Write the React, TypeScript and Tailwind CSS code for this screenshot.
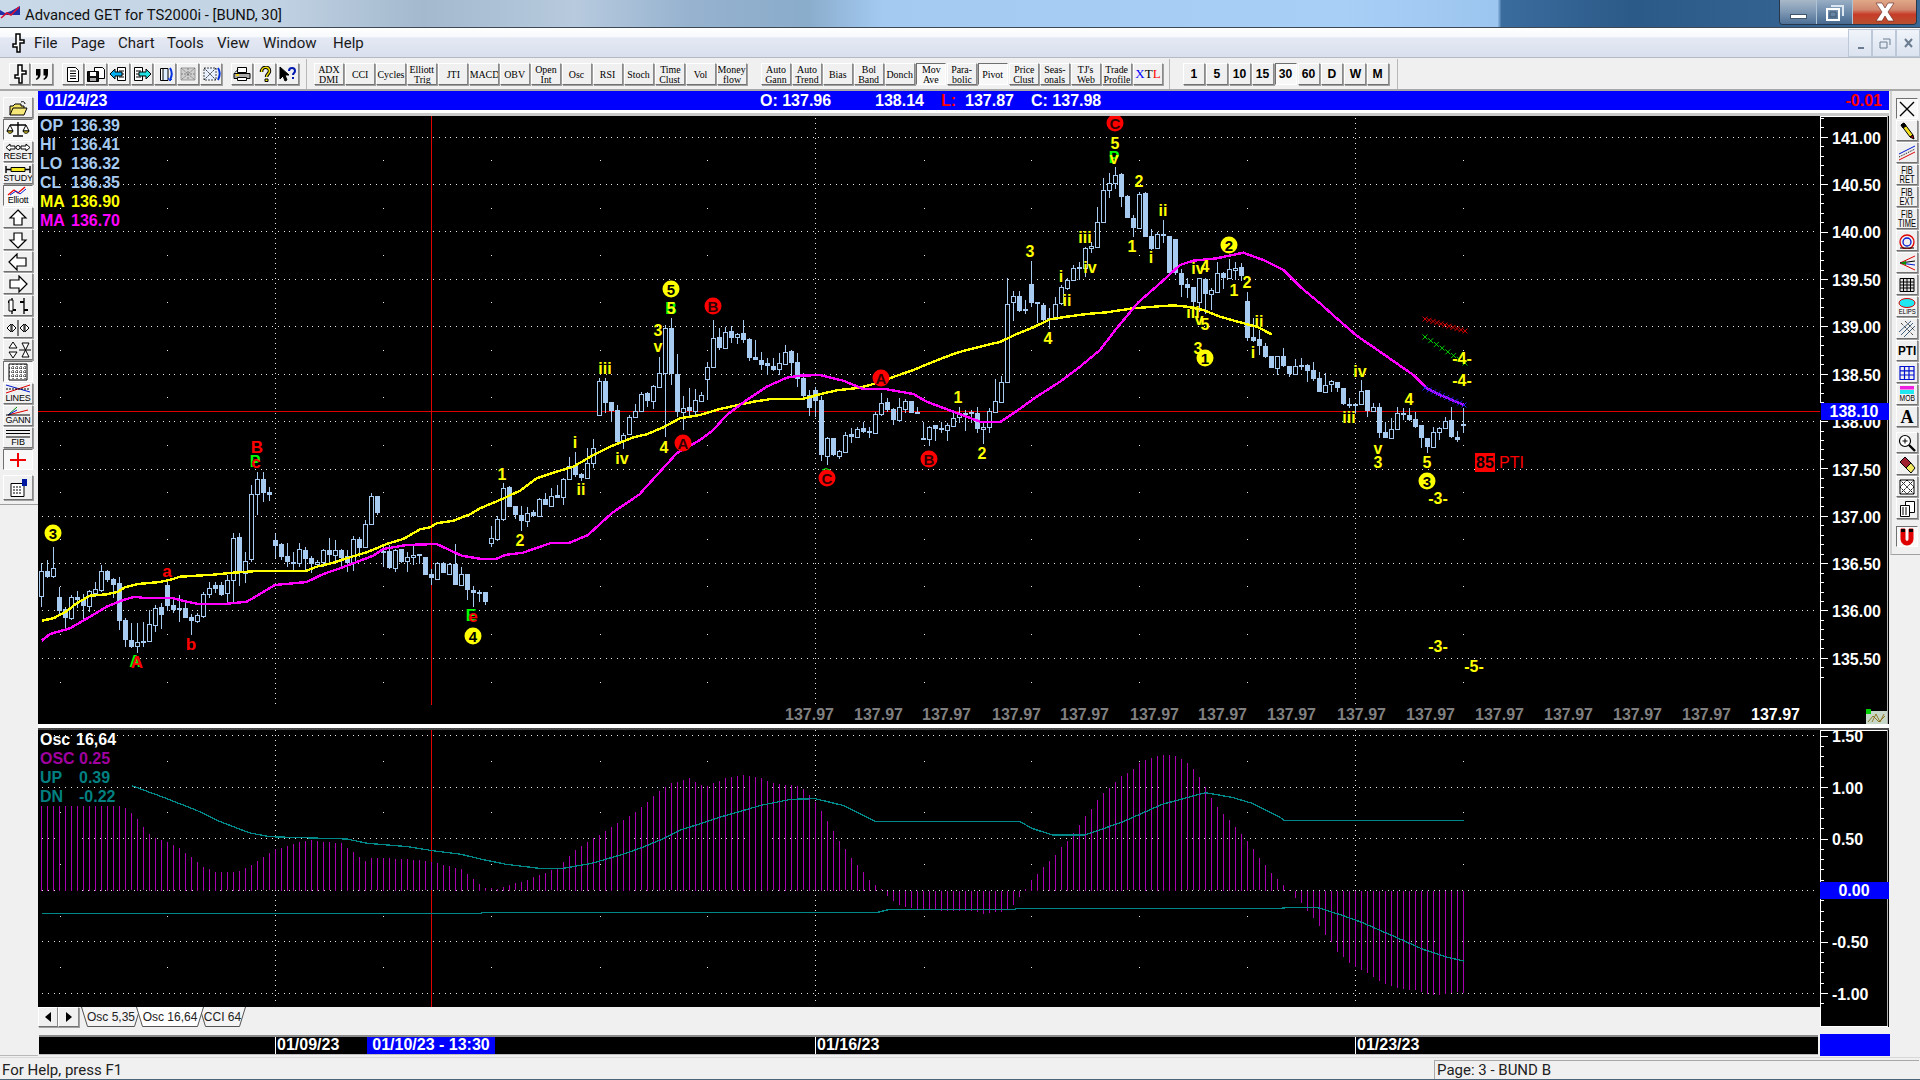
import type { ReactNode } from 'react';

type Row = number[];

// body and wick values are read off the chart: [x, high, bodyTop, bodyBottom, low, filled]
const toBars = (ox: number, oy: number, fx: number, rows: Row[]) =>
  rows.map(([x, hi, top, bot, lo, fill]) => ({
    x: Math.floor(ox + x / fx),
    hi: Math.round(oy + hi / 3),
    top: Math.round(oy + top / 3),
    bot: Math.round(oy + bot / 3),
    lo: Math.round(oy + lo / 3),
    fill,
  }));

const rowsA: Row[] = [
  [5,340,362,437,472,0],[23,330,363,380,385,1],[41,292,355,377,385,0],[59,412,442,483,497,1],[77,470,478,503,533,1],
  [95,435,442,503,510,0],[113,422,442,450,475,1],[131,432,448,468,508,1],[149,420,424,467,485,0],[167,395,418,428,440,0],
  [185,345,364,419,425,0],[203,360,363,389,395,1],[221,385,388,404,443,1],[239,380,400,512,540,1],[257,505,511,570,590,1],
  [275,518,570,590,595,1],[293,518,577,587,608,0],[311,516,574,578,590,1],[329,480,523,572,572,0],[347,465,473,525,545,0],
  [365,460,471,495,538,1],[383,392,405,467,483,1],[401,450,465,480,490,1],[419,435,475,479,515,1],[437,450,474,503,505,1],
  [455,493,502,512,555,1],[473,490,496,512,520,0],[491,425,433,497,503,0],[509,395,415,433,445,0],[527,395,406,416,430,1],
  [545,395,405,435,437,1],[563,375,391,430,455,0],[581,250,263,391,463,0],[599,250,262,370,408,1],[617,305,332,369,398,0],
  [635,105,133,328,335,0],[653,65,88,133,195,0],[671,67,88,128,155,1],[689,112,126,134,152,1],[707,252,271,288,325,1],
  [725,280,283,320,330,1],[743,280,319,335,350,1],[761,306,335,341,360,1],[779,278,298,340,352,0],[797,290,301,326,360,1],
  [815,318,325,342,368,1],[833,330,335,342,355,0],[851,298,301,336,350,0],[869,265,300,315,345,1],[887,270,299,315,335,0],
  [905,298,301,323,350,1],[923,300,318,339,365,1],[941,258,268,338,362,0],[959,262,268,294,320,1],[977,210,223,292,295,0],
  [995,128,137,223,225,0],[1013,139,139,188,195,1],[1031,290,302,307,352,1],[1049,285,304,354,356,1],[1067,298,300,353,365,0],
  [1085,298,298,336,340,1],[1103,305,320,334,365,0],[1121,288,314,319,345,0],[1139,313,313,319,342,1],[1157,320,322,374,376,1],
  [1175,358,372,384,405,1],[1193,335,340,386,390,0],[1211,335,340,369,370,1],[1229,340,343,372,375,0],[1247,282,343,404,404,1],
  [1265,352,373,404,405,0],[1283,373,373,420,450,1],[1301,408,421,428,470,1],[1319,420,427,429,455,1],[1337,427,427,456,465,1],
  [1355,228,265,278,290,0],[1373,198,208,267,272,0],[1391,100,115,208,212,0],[1409,108,112,170,172,1],[1427,168,169,195,208,1],
];

const rowsB: Row[] = [
  [1278,797,825,843,872,1],[1292,800,818,842,860,0],[1307,810,817,828,830,1],[1322,775,778,827,830,0],[1337,760,777,795,795,1],
  [1351,743,767,797,800,0],[1366,735,765,775,775,1],[1381,715,718,772,795,0],[1395,650,678,718,720,0],[1410,635,678,705,710,1],
  [1425,700,703,713,722,1],[1440,625,670,713,715,0],[1454,598,625,670,685,0],
];

const rowsC: Row[] = [
  [239,205,214,316,318,0],[257,205,213,278,310,1],[275,277,277,302,335,1],[293,285,300,396,400,1],[311,370,374,394,418,0],
  [329,316,320,372,375,0],[347,282,302,320,325,0],[365,245,253,303,305,0],[383,245,250,273,290,1],[401,225,229,272,297,0],
  [419,140,190,230,232,0],[437,45,53,188,380,0],[455,25,55,192,225,1],[473,132,193,305,322,1],[491,258,293,307,360,0],
  [509,235,292,303,325,1],[527,238,271,303,320,0],[545,245,256,272,273,0],[563,155,172,208,270,0],[581,30,83,172,175,0],
  [599,55,82,113,120,1],[617,50,65,113,115,0],[635,48,64,84,100,1],[653,70,73,82,102,0],[671,30,70,90,100,1],
  [689,85,88,143,152,1],[707,90,141,149,150,1],[725,125,149,165,180,1],[743,145,160,167,195,1],[761,145,168,179,182,1],
  [779,130,160,178,195,0],[797,105,127,161,162,0],[815,120,124,158,200,1],[833,130,156,206,230,1],[851,190,205,258,262,1],
  [869,240,255,293,318,1],[887,232,241,272,320,1],[905,258,271,435,452,1],[923,380,385,437,465,0],[941,385,385,435,437,1],
  [959,420,424,437,448,0],[977,365,374,426,428,0],[995,355,373,380,400,1],[1013,350,356,381,385,0],[1031,335,355,365,368,1],
  [1049,350,364,368,385,1],[1067,307,311,368,372,0],[1085,248,278,312,318,0],[1103,265,276,300,305,1],[1121,295,297,330,345,1],
  [1139,265,292,330,335,0],[1157,268,274,297,310,0],[1175,272,274,308,310,1],[1193,290,307,309,310,1],[1211,335,383,386,388,1],
  [1229,348,350,386,408,0],[1247,345,346,356,392,1],[1265,335,355,358,368,1],[1283,340,344,361,392,0],[1301,310,325,347,350,0],
  [1319,290,311,322,338,0],[1337,300,308,312,362,1],[1355,300,305,311,340,1],[1373,290,310,358,368,1],[1391,335,352,358,402,0],
  [1409,295,304,350,370,0],[1427,208,272,305,308,0],
];

const rowsD: Row[] = [
  [5,632,650,710,712,0],[23,340,416,650,652,0],[41,378,394,412,468,0],[59,378,394,437,440,1],[77,405,433,437,447,1],
  [95,288,358,414,425,1],[113,411,411,418,475,1],[131,415,420,466,475,1],[149,430,460,466,492,1],[167,395,416,461,463,0],
  [185,360,367,414,420,0],[203,340,346,368,375,0],[221,300,310,344,345,0],[239,290,306,311,345,1],[257,245,250,310,335,0],
  [275,230,244,250,265,0],[293,125,172,245,247,0],[311,38,76,170,172,0],[329,25,55,76,100,0],[347,5,30,55,72,0],
  [365,25,27,97,125,1],[383,90,92,158,160,1],[401,150,160,190,215,1],[419,82,88,188,190,0],[437,82,84,215,217,1],
  [455,192,213,252,255,1],[473,200,208,248,250,0],[491,165,208,214,235,1],[509,212,214,325,325,1],[527,222,222,325,330,1],
  [545,312,325,359,395,1],[563,340,358,368,400,1],[581,365,367,410,435,1],[599,338,340,410,440,0],[617,338,342,388,448,1],
  [635,368,374,386,435,0],[653,290,325,380,382,0],[671,320,325,340,372,1],[689,282,313,340,342,0],[707,290,308,316,345,0],
  [725,295,306,333,347,1],[743,380,408,518,528,1],[761,460,517,527,532,1],[779,496,522,542,570,1],[797,535,543,577,578,1],
  [815,573,573,608,610,1],[833,572,574,608,630,0],[851,550,574,604,605,1],[869,602,604,627,635,1],[887,582,602,628,630,0],
  [905,580,599,602,615,1],[923,598,600,618,650,1],[941,590,616,642,648,1],[959,620,640,680,682,1],[977,625,660,680,682,0],
  [995,645,649,658,682,0],[1013,650,652,668,680,1],[1031,668,670,716,720,1],[1049,700,717,724,728,1],[1067,716,718,720,745,1],
  [1085,645,677,718,720,0],[1103,676,676,738,755,1],[1121,715,727,737,742,0],[1139,715,727,803,818,1],[1157,770,802,818,820,1],
  [1175,760,793,818,820,0],[1193,725,745,792,795,0],[1211,728,743,747,765,1],[1229,730,750,765,768,1],[1247,740,763,785,790,1],
  [1265,780,781,820,848,1],[1283,820,820,845,865,1],[1301,785,800,845,847,0],[1319,785,788,801,825,0],[1337,755,767,788,790,0],
  [1355,725,766,817,820,1],[1373,798,815,825,830,1],[1391,730,777,780,805,1],
];

const bars = [
  ...toBars(40, 450, 3, rowsA),
  ...toBars(0, 240, 2.45, rowsB),
  ...toBars(520, 310, 3, rowsC),
  ...toBars(1000, 165, 3, rowsD),
];

const pts = (ox: number, oy: number, fx: number, list: number[][]) =>
  list.map(([x, y]) => `${(ox + x / fx).toFixed(1)},${(oy + y / 3).toFixed(1)}`).join(' ');

const yellowLine = [
  pts(40, 450, 3, [[5,512],[40,505],[75,487],[110,460],[150,437],[200,433],[235,425],[255,412],[295,402],[360,396],[400,387],[420,380],[520,374],[580,368],[640,364],[800,362],[830,350],[880,338],[930,322],[980,307],[1040,282],[1090,267],[1140,238],[1170,232],[1190,220],[1240,212],[1290,193],[1320,175],[1380,150],[1440,122]]),
  pts(520, 310, 3, [[50,505],[100,488],[160,470],[215,438],[270,410],[340,382],[380,373],[430,352],[480,325],[540,315],[600,297],[650,286],[700,275],[760,266],[850,266],[900,253],[950,241],[1020,233],[1060,222],[1180,180],[1240,155],[1300,132],[1340,120],[1400,105],[1440,96]]),
  pts(1000, 165, 3, [[50,507],[100,487],[150,463],[200,455],[260,447],[320,442],[400,430],[450,426],[520,421],[560,425],[610,435],[660,455],[720,472],[770,485],[815,508]]),
].join(' ');

const magentaLine = [
  pts(40, 450, 3, [[5,572],[30,552],[90,535],[150,500],[200,470],[250,450],[285,440],[305,443],[400,445],[440,455],[470,461],[560,461],[620,455],[660,432],[705,405],[800,396],[850,372],[900,355],[1000,317],[1030,297],[1100,285],[1190,282],[1265,317],[1320,326],[1370,326],[1395,315],[1440,309]]),
  '522,553 551,543 569,543 588,535 612,513 640,494',
  pts(520, 310, 3, [[370,540],[420,485],[470,430],[540,390],[580,360],[620,315],[680,270],[740,230],[800,203],[840,197],[900,195],[970,212],[1030,237],[1100,238],[1180,252],[1220,275],[1300,305],[1380,335],[1440,337]]),
  pts(1000, 165, 3, [[50,738],[110,695],[180,650],[240,605],[300,555],[350,490],[415,412],[480,355],[540,300],[580,287],[650,280],[730,263],[790,285],[850,315],[900,365],[960,415],[1010,460],[1070,512],[1140,560],[1240,630],[1280,670],[1320,690],[1392,720]]),
].join(' ');

const tealUpper = [
  pts(0, 720, 2.45, [[323,197],[400,232],[480,270],[540,305],[610,338],[660,350],[850,357],[900,370],[1000,380],[1060,392],[1130,403],[1180,418],[1240,433],[1320,445],[1380,445],[1450,430],[1520,405]]),
  pts(640, 720, 2.45, [[0,385],[50,360],[100,330],[200,290],[300,255],[370,238],[430,236],[500,257],[575,304],[930,304],[960,325],[1010,345],[1090,345],[1180,307],[1280,253],[1385,218],[1450,232],[1500,250],[1568,292]]),
  pts(1280, 720, 2.45, [[10,301],[450,301]]),
].join(' ');

const tealLower = [
  pts(0, 720, 2.45, [[103,580],[1180,580],[1181,577]]),
  pts(640, 720, 2.45, [[583,577],[612,568],[920,568],[921,565]]),
  pts(1280, 720, 2.45, [[0,565],[30,562],[90,562],[150,585],[200,607],[290,655],[350,688],[410,712],[450,723]]),
].join(' ');

// oscillator histogram tops, [bar index, value]; the steps between are interpolated
const oscKeys: number[][] = [
  [0,258],[13,258],[14,265],[15,280],[16,297],[17,322],[18,342],[19,354],[21,365],[23,385],[25,410],[27,440],[29,455],[31,457],[33,452],[35,435],[37,412],[39,388],[41,378],[43,365],[45,360],[47,365],[50,370],[52,397],[54,422],[55,415],[57,414],[63,420],[66,430],[69,443],[70,447],[72,478],[74,503],[76,507],[78,495],[80,485],[82,472],[84,458],[86,443],[87,427],[89,390],[91,365],[93,345],[95,320],[97,300],[100,262],[103,213],[105,190],[108,175],[110,195],[111,198],[114,175],[117,165],[120,175],[122,190],[126,197],[127,208],[128,225],[129,247],[130,273],[131,303],[132,333],[133,363],[134,388],[135,415],[136,435],[137,456],[138,480],[139,495],[140,508],[141,527],[142,540],[143,553],[144,560],[146,567],[152,572],[155,570],[157,581],[158,578],[159,574],[160,575],[161,565],[162,552],[163,530],[164,507],[165,480],[166,462],[167,442],[168,422],[169,405],[170,382],[171,362],[172,340],[173,315],[174,288],[175,267],[176,240],[177,220],[178,203],[179,185],[180,167],[181,160],[182,148],[183,130],[184,120],[185,115],[186,108],[187,105],[188,105],[189,108],[190,118],[191,130],[192,148],[193,172],[194,202],[195,233],[196,262],[197,282],[198,300],[199,320],[200,342],[201,362],[202,388],[203,415],[204,435],[205,458],[206,478],[207,495],[208,510],[209,533],[210,548],[211,570],[212,592],[213,615],[214,642],[215,665],[216,693],[217,708],[218,727],[219,740],[220,748],[221,758],[222,768],[223,780],[224,790],[225,797],[226,802],[227,805],[228,808],[229,808],[230,815],[231,820],[232,822],[233,823],[234,820],[235,818],[236,815],[237,817],
];

const oscBars: number[][] = [];
for (let i = 0; i < oscKeys.length - 1; i++) {
  const [a, av] = oscKeys[i];
  const [b, bv] = oscKeys[i + 1];
  for (let n = a; n < b; n++) oscBars.push([n, av + ((bv - av) * (n - a)) / (b - a)]);
}
oscBars.push(oscKeys[oscKeys.length - 1]);

const priceGrid = [137, 184, 231, 279, 326, 374, 421, 469, 516, 563, 610, 658];
const priceDots = [160, 208, 255, 302, 350, 397, 445, 492, 539, 586, 634, 682];
const dotCols = [60, 167, 383, 491, 600, 707, 924, 1031, 1139, 1247, 1463];
const vGrid = [275, 815, 1355];

const priceLabels = ['141.00','140.50','140.00','139.50','139.00','138.50','138.00','137.50','137.00','136.50','136.00','135.50'];
const flatPrices = [785, 854, 922, 992, 1060, 1130, 1198, 1267, 1337, 1406, 1475, 1544, 1613, 1682];

// wave count: [x, y, text]
const yellowText: [number, number, string][] = [
  [502,474,'1'],[520,540,'2'],[575,442,'i'],[581,489,'ii'],[605,368,'iii'],[622,458,'iv'],[658,330,'3'],[658,346,'v'],[664,447,'4'],
  [958,397,'1'],[982,453,'2'],[1030,251,'3'],[1061,276,'i'],[1067,300,'ii'],[1048,338,'4'],[1085,237,'iii'],[1090,267,'iv'],
  [1139,181,'2'],[1132,246,'1'],[1163,210,'ii'],[1151,257,'i'],[1198,268,'iv'],[1205,266,'4'],[1234,290,'1'],[1247,282,'2'],
  [1193,312,'iii'],[1199,319,'v'],[1205,324,'5'],[1198,348,'3'],[1259,321,'ii'],[1253,352,'i'],[1360,371,'iv'],[1349,417,'iii'],
  [1378,448,'v'],[1378,462,'3'],[1409,399,'4'],[1427,462,'5'],[1115,143,'5'],[1462,358,'-4-'],[1462,380,'-4-'],[1438,498,'-3-'],[1438,646,'-3-'],[1474,666,'-5-'],
];
const redText: [number, number, string][] = [[167,571,'a'],[191,644,'b'],[137,662,'A'],[257,447,'B'],[256,462,'c'],[473,616,'e']];
const greenText: [number, number, string][] = [[135,661,'A'],[255,461,'P'],[471,615,'E'],[671,308,'B'],[1114,157,'P']];
const overlayText: [number, number, string][] = [[671,308,'5'],[1114,158,'v']];
const yellowCircles: [number, number, string][] = [[53,533,'3'],[473,636,'4'],[671,289,'5'],[1229,245,'2'],[1205,358,'1'],[1427,481,'3']];
const redCircles: [number, number, string][] = [[683,443,'A'],[713,306,'B'],[881,378,'A'],[827,478,'C'],[929,459,'B'],[1115,123,'C']];

const xMarks = (x1: number, y1: number, x2: number, y2: number, n: number) =>
  Array.from({ length: n }, (_, i) => {
    const x = x1 + ((x2 - x1) * i) / (n - 1);
    const y = y1 + ((y2 - y1) * i) / (n - 1);
    return `M${x - 2.5} ${y - 2.5}l5 5M${x + 2.5} ${y - 2.5}l-5 5`;
  }).join('');

const Bevel = ({ pressed, className, children }: { pressed?: boolean; className: string; children?: ReactNode }) => (
  <div
    className={`flex flex-col items-center justify-center overflow-hidden border ${className} ${
      pressed
        ? 'border-t-[#707070] border-l-[#707070] border-r-white border-b-white bg-[#f8f8f8]'
        : 'border-t-white border-l-white border-r-[#8a8a8a] border-b-[#707070] bg-[#f0f0f0] shadow-[1px_1px_0_#a0a0a0]'
    }`}
  >
    {children}
  </div>
);

const Ico = ({ w = 22, h = 16, children }: { w?: number; h?: number; children: ReactNode }) => (
  <svg width={w} height={h} viewBox={`0 0 ${w} ${h}`} fill="none" stroke="#000" strokeWidth="1">
    {children}
  </svg>
);

const Dagger = ({ fill = '#fff' }: { fill?: string }) => (
  <svg width="14" height="20" viewBox="0 0 14 20" fill={fill} stroke="#000" strokeWidth="1.5">
    <path d="M5 1h4v6h4v3H9v9H6v-5H2v-3h3z" />
  </svg>
);

const DocLines = () => (
  <>
    <path d="M5.5 1.5h8l3 3v11h-11z" fill="#fff" />
    <path d="M8 5h6M8 7.5h6M8 10h6M8 12.5h6" />
  </>
);

const topIcons: { key: string; icon: ReactNode }[] = [
  { key: 'new', icon: <Ico><DocLines /></Ico> },
  { key: 'save', icon: <Ico><path d="M9.5 1.5h8l2 2v9h-10z" fill="#fff" /><path d="M2.5 5.5h11v10h-11z" fill="#111" /><path d="M5 6h6v4H5z" fill="#fff" stroke="none" /><path d="M5 12h6v3H5z" fill="#aaa" stroke="none" /></Ico> },
  { key: 'prev', icon: <Ico><path d="M9.5 1.5h8v13h-8z" fill="#fff" /><path d="M11 5h5M11 8h5M11 11h5" /><path d="M2 8l5-5v3h7v4H7v3z" fill="#00b0f0" /></Ico> },
  { key: 'next', icon: <Ico><path d="M3.5 1.5h8v13h-8z" fill="#fff" /><path d="M5 5h5M5 8h5M5 11h5" /><path d="M20 8l-5-5v3H8v4h7v3z" fill="#20e0e0" /></Ico> },
  { key: 'cycle', icon: <Ico><path d="M6.5 2.5h5v12h-5z" fill="#fff" /><path d="M9 2.5h5v12H9z" fill="#dfefff" /><path d="M16 2c2 3 2 8 0 12" stroke="#0030e0" strokeWidth="2" /><path d="M14 12l2 3 2-2" stroke="#0030e0" /></Ico> },
  { key: 'off', icon: <Ico><path d="M4 2h14v12H4z" fill="#d0d0d0" stroke="#999" /><path d="M4 2l14 12M18 2L4 14M11 2v12M4 8h14" stroke="#808080" strokeDasharray="2 1" /></Ico> },
  { key: 'merge', icon: <Ico><path d="M4 2h12v12H4z" fill="#e8f0ff" stroke="#444" strokeDasharray="2 1" /><path d="M4 2l12 12M16 2L4 14" stroke="#333" strokeDasharray="2 1" /><path d="M18 2c2 3 2 8 0 12" stroke="#0030e0" strokeWidth="2" /></Ico> },
];

const helpIcons: { key: string; icon: ReactNode }[] = [
  { key: 'print', icon: <Ico><path d="M6.5 1.5h9v5h-9z" fill="#fff" /><path d="M3 7.5h16v5H3z" fill="#aaa" /><path d="M6.5 11.5h9v3h-9z" fill="#fff" /><path d="M5 9h3" stroke="#e8d020" strokeWidth="2" /><path d="M4 6.5l3-3" /></Ico> },
  { key: 'about', icon: <Ico><path d="M7.5 6c0-6 8-6 8-1 0 3-3 3-3 6" stroke="#000" strokeWidth="3.5" /><path d="M7.5 6c0-6 8-6 8-1 0 3-3 3-3 6" stroke="#f0e000" strokeWidth="1.5" /><path d="M11 13h3v2.5h-3z" fill="#f0e000" /></Ico> },
  { key: 'context', icon: <Ico><path d="M3 1v12l3-3 2 5 2-1-2-5h4z" fill="#000" /><path d="M12 5c0-4 6-4 6 0 0 2-2 2-2 4" stroke="#0018b0" strokeWidth="2" /><path d="M15 11h2v2h-2z" fill="#0018b0" stroke="none" /></Ico> },
];

const studyA: [string, string?][] = [
  ['ADX','DMI'],['CCI'],['Cycles'],['Elliott','Trig'],['JTI'],['MACD'],['OBV'],['Open','Int'],['Osc'],['RSI'],['Stoch'],['Time','Clust'],['Vol'],['Money','flow'],
];
const studyB: [string, string?, boolean?][] = [
  ['Auto','Gann'],['Auto','Trend'],['Bias'],['Bol','Band'],['Donch'],['Mov','Ave',true],['Para-','bolic'],['Pivot',undefined,true],['Price','Clust'],['Seas-','onals'],["TJ's",'Web'],['Trade','Profile'],
];

const StudyBtn = ({ a, b, pressed }: { a: string; b?: string; pressed?: boolean }) => (
  <Bevel pressed={pressed} className="w-[30px] h-[22px] mr-px">
    <span className="font-['Liberation_Serif',serif] text-[11px] leading-[10px] text-center whitespace-nowrap scale-x-90 text-black">{a}</span>
    {b && <span className="font-['Liberation_Serif',serif] text-[11px] leading-[10px] text-center whitespace-nowrap scale-x-90 text-black">{b}</span>}
  </Bevel>
);

const SmallLabel = ({ children }: { children: ReactNode }) => (
  <span className="text-[9px] leading-[9px] text-black tracking-tight">{children}</span>
);

const Toolbar = () => (
  <div className="h-[34px] flex items-start pt-[5px] pl-[9px] bg-[#f0f0f0] border-t border-t-[#b4bac4] border-b-2 border-b-[#a8a8a8]">
    <Bevel className="w-[21px] h-[22px] mr-px"><Dagger /></Bevel>
    <Bevel className="w-[22px] h-[22px] mr-[9px]">
      <svg width="16" height="11" viewBox="0 0 16 11" fill="#000">
        <path d="M2 0h4.5v5C6.5 8 5 10 2.5 11l-.7-1.2C3.2 9 4 8 4 6.5H2zM9.5 0H14v5c0 3-1.5 5-4 6l-.7-1.2C10.7 9 11.5 8 11.5 6.5h-2z" />
      </svg>
    </Bevel>
    {topIcons.map((t) => (
      <Bevel key={t.key} className="w-[22px] h-[22px] mr-px">{t.icon}</Bevel>
    ))}
    <div className="w-[8px]" />
    {helpIcons.map((t) => (
      <Bevel key={t.key} className="w-[22px] h-[22px] mr-px">{t.icon}</Bevel>
    ))}
    <div className="w-px h-[30px] -mt-[4px] bg-[#b8b8b8] ml-[6px] mr-[7px]" />
    {studyA.map(([a, b]) => (
      <StudyBtn key={a} a={a} b={b} />
    ))}
    <div className="w-[13px]" />
    {studyB.map(([a, b, p]) => (
      <StudyBtn key={a + b} a={a} b={b} pressed={p} />
    ))}
    <Bevel className="w-[30px] h-[22px]">
      <span className="font-['Liberation_Serif',serif] text-[13px] leading-[14px]">
        <span className="text-[#0000ff]">X</span><span className="text-black">T</span><span className="text-[#ff0000]">L</span>
      </span>
    </Bevel>
    <div className="w-px h-[30px] -mt-[4px] bg-[#b8b8b8] ml-[6px] mr-[13px]" />
    {['1', '5', '10', '15', '30', '60', 'D', 'W', 'M'].map((t) => (
      <Bevel key={t} pressed={t === '30'} className="w-[22px] h-[22px] mr-px">
        <span className="text-[13.5px] leading-[14px] font-bold text-black scale-x-90">{t}</span>
      </Bevel>
    ))}
    <div className="w-px h-[30px] -mt-[4px] bg-[#b8b8b8] ml-[7px]" />
  </div>
);

const Arrow = ({ d }: { d: string }) => (
  <Ico w={24} h={18}><path d={d} fill="#fff" strokeWidth="1.2" /></Ico>
);

const leftTools: { key: string; pressed?: boolean; icon: ReactNode }[] = [
  { key: 'folder', icon: <Ico><path d="M3 15V6h3l2-2h6v2h3v2" fill="#f0e060" /><path d="M3 15l3-7h14l-3 7z" fill="#f5e878" /><path d="M14 2c2-1 4 0 4 2" /></Ico> },
  { key: 'scales', pressed: true, icon: <Ico w={26} h={18}><path d="M13 1v13M5 4h16M8 15h10" strokeWidth="1.4" /><path d="M5 4l-3 6h6zM21 4l-3 6h6z" fill="#fff" /><path d="M2 10c1 3 5 3 6 0zM18 10c1 3 5 3 6 0z" fill="#f2e020" /></Ico> },
  { key: 'reset', icon: <><Ico w={26} h={9}><path d="M1 4.5l4-3.5v2h5v3H5v2zM25 4.5l-4-3.5v2h-5v3h5v2z" fill="#fff" /><circle cx="13" cy="4.5" r="2" fill="#fff" /></Ico><SmallLabel>RESET</SmallLabel></> },
  { key: 'study', icon: <><Ico w={26} h={9}><path d="M1 1v7M25 1v7M1 4.5h24" strokeWidth="1.4" /><path d="M6 2.5h14v4H6z" fill="#f4e820" /></Ico><SmallLabel>STUDY</SmallLabel></> },
  { key: 'elliott', pressed: true, icon: <><Ico w={24} h={10}><path d="M2 9l6-5 4 3 7-6" stroke="#f00000" strokeWidth="1.2" /><path d="M4 9l6-4 4 3 6-5" stroke="#0020d0" /></Ico><SmallLabel>Elliott</SmallLabel></> },
  { key: 'up', icon: <Arrow d="M12 1l8 8h-4v7H8V9H4z" /> },
  { key: 'down', icon: <Arrow d="M12 17l8-8h-4V2H8v7H4z" /> },
  { key: 'left', icon: <Arrow d="M3 9l8-8v4h9v8h-9v4z" /> },
  { key: 'right', icon: <Arrow d="M21 9l-8-8v4H4v8h9v4z" /> },
  { key: 'ticks', icon: <Ico w={26} h={18}><path d="M7 1v16M19 1v16" strokeWidth="1.3" /><path d="M3 5h4M7 13h4M15 5h4M19 13h4" strokeWidth="2" /><path d="M4 3h4v11H4z" fill="#fff" /></Ico> },
  { key: 'hscale', icon: <Ico w={26} h={18}><path d="M13 1v16" /><path d="M2 9l4-4v8zM11 9l-4-4v8zM15 9l4-4v8zM24 9l-4-4v8z" fill="#fff" /></Ico> },
  { key: 'vscale', icon: <Ico w={26} h={18}><path d="M8 1l4 6H4zM8 17l4-6H4z" fill="#fff" /><path d="M17 2h7l-7 14h7z" fill="#fff" /><path d="M14 9h12" /></Ico> },
  { key: 'grid', pressed: true, icon: <Ico w={24} h={18}><path d="M3 1h18v16H3z" fill="#fff" /><path d="M3 5h18M3 9h18M3 13h18M7 1v16M11 1v16M15 1v16M19 1v16" strokeDasharray="1 1" /></Ico> },
  { key: 'lines', icon: <><Ico w={26} h={10}><path d="M1 1l24 7" stroke="#0018d0" /><path d="M1 9l24-8" stroke="#e00000" /><path d="M1 5h24" stroke="#000" strokeDasharray="2 1" /></Ico><SmallLabel>LINES</SmallLabel></> },
  { key: 'gann', icon: <><Ico w={26} h={10}><path d="M3 9L12 1" stroke="#009000" /><path d="M3 9l20-5" stroke="#e00000" /><path d="M3 9l9-5" stroke="#0018d0" /><path d="M1 9h24" /></Ico><SmallLabel>GANN</SmallLabel></> },
  { key: 'fib', icon: <><Ico w={26} h={9}><path d="M1 1.5h24M1 4.5h24M1 8h24" /></Ico><SmallLabel>FIB</SmallLabel></> },
  { key: 'cross', pressed: true, icon: <Ico w={24} h={16}><path d="M12 1v14M4 8h16" stroke="#f00000" strokeWidth="2" /></Ico> },
];

const rightTools: { key: string; pressed?: boolean; icon: ReactNode; gap?: number }[] = [
  { key: 'x', pressed: true, icon: <Ico w={18} h={16}><path d="M2 1l14 14M16 1L2 15" strokeWidth="1.4" /></Ico> },
  { key: 'pen', icon: <Ico w={18} h={18}><path d="M3 3l3-2 9 12-3 2z" fill="#f2e020" /><path d="M3 3l3-2 2 3-3 2z" fill="#000" /><path d="M12 15l3-2 1 4z" fill="#c00000" /></Ico> },
  { key: 'par', icon: <Ico w={18} h={16}><path d="M1 9l16-8" stroke="#0018d0" /><path d="M1 12l16-8" stroke="#000" strokeDasharray="1 1" /><path d="M1 15l16-8" stroke="#e00000" /></Ico> },
  { key: 'fibret', icon: <span className="text-[10px] leading-[9px] text-center text-black scale-x-75 whitespace-pre-line">{'FIB\nRET'}</span> },
  { key: 'fibext', icon: <span className="text-[10px] leading-[9px] text-center text-black scale-x-75 whitespace-pre-line">{'FIB\nEXT'}</span> },
  { key: 'fibtime', icon: <span className="text-[10px] leading-[9px] text-center text-black scale-x-75 whitespace-pre-line">{'FIB\nTIME'}</span> },
  { key: 'arc', icon: <Ico w={18} h={16}><circle cx="9" cy="9" r="7" stroke="#e00000" strokeWidth="1.3" /><circle cx="9" cy="9" r="4" stroke="#0018d0" strokeWidth="1.3" /><path d="M2 15h14" /></Ico> },
  { key: 'fan', icon: <Ico w={18} h={16}><path d="M2 8l15-7" stroke="#e00000" /><path d="M2 8l15-2" stroke="#000" /><path d="M2 8l15 2" stroke="#0018d0" /><path d="M2 8l15 7" stroke="#e00000" /><path d="M2 8l6-2v4z" fill="#009000" stroke="none" /></Ico> },
  { key: 'gridr', icon: <Ico w={18} h={16}><path d="M2 1.5h14v13H2z" fill="#ddd" /><path d="M2 5h14M2 8h14M2 11h14M5.5 1v14M9 1v14M12.5 1v14" /></Ico> },
  { key: 'elips', icon: <><Ico w={18} h={10}><ellipse cx="9" cy="5" rx="8" ry="4.5" fill="#20e8f0" stroke="#e00000" /></Ico><span className="text-[8px] leading-[8px] text-black scale-x-75">ELIPS</span></> },
  { key: 'diag', icon: <Ico w={18} h={18}><path d="M1 12L13 1M3 15L15 3M6 17L17 6" stroke="#406080" /><path d="M3 3l12 12M7 1l10 10" stroke="#000" strokeDasharray="1 1" /></Ico> },
  { key: 'pti', icon: <span className="text-[13px] leading-[14px] font-bold text-black scale-x-90">PTI</span> },
  { key: 'bgrid', icon: <Ico w={18} h={16}><path d="M2 1.5h14v13H2zM2 5.8h14M2 10h14M6.5 1v14M11 1v14" stroke="#0010d0" strokeWidth="1.2" /></Ico> },
  { key: 'mob', icon: <><Ico w={18} h={8}><path d="M2 0h14v3.5H2z" fill="#f020e0" stroke="none" /><path d="M2 4h14v4H2z" fill="#20e8f0" stroke="none" /></Ico><span className="text-[9px] leading-[9px] text-black scale-x-75">MOB</span></> },
  { key: 'font', icon: <span className="font-['Liberation_Serif',serif] text-[18px] leading-[18px] font-bold text-black">A</span> },
  { key: 'zoom', gap: 4, icon: <Ico w={18} h={18}><circle cx="7" cy="7" r="5.5" fill="#fff" strokeWidth="1.2" /><path d="M11 11l6 6" strokeWidth="2.4" /><path d="M4.5 7h5M7 4.5v5" /></Ico> },
  { key: 'erase', icon: <Ico w={18} h={18}><path d="M2 6l5-5 6 6-5 5z" fill="#a02030" /><path d="M8 12l5-5 4 5-4 5z" fill="#f2e860" /></Ico> },
  { key: 'pat', icon: <Ico w={18} h={18}><path d="M2 2h14v14H2z" fill="#fff" /><path d="M2 2l14 14M16 2L2 16M9 2L2 9M9 2l7 7M2 9l7 7M16 9l-7 7" strokeDasharray="2 1" /></Ico> },
  { key: 'docs', icon: <Ico w={18} h={18}><path d="M7.5 1.5h9v11h-9z" fill="#fff" /><path d="M2.5 5.5h9v11h-9z" fill="#fff" /><path d="M4 8h6M4 10h6M4 12h6M4 14h6" strokeDasharray="2 1" /></Ico> },
  { key: 'mag', pressed: true, gap: 6, icon: <Ico w={18} h={18}><path d="M3 1h4v10c0 3 4 3 4 0V1h4v10c0 8-12 8-12 0z" fill="#e00000" stroke="#e00000" /><path d="M3 1h4v3H3zM11 1h4v3h-4z" fill="#000" stroke="none" /></Ico> },
];

const PricePlot = () => (
  <svg width="1782" height="608" viewBox="38 116 1782 608" className="block bg-black">
    <g shapeRendering="crispEdges">
      {priceGrid.map((y) => (
        <path key={y} d={`M42 ${y}.5H1815`} stroke="#e8e8e8" strokeDasharray="1 4.75" />
      ))}
      {vGrid.map((x) => (
        <path key={x} d={`M${x}.5 118V704`} stroke="#e8e8e8" strokeDasharray="1 4" />
      ))}
      {priceDots.map((y) =>
        dotCols.map((x) => <rect key={`${x}-${y}`} x={x} y={y} width="1" height="1" fill="#e8e8e8" />),
      )}
      <path d="M38 411.5H1820" stroke="#e00000" />
      <path d="M431.5 116V705" stroke="#e00000" />
      {bars.map((b) => (
        <g key={b.x}>
          <rect x={b.x} y={b.hi} width="1" height={Math.max(b.lo - b.hi, 1)} fill="#a6caf0" />
          {b.fill ? (
            <rect x={b.x - 2} y={b.top} width="5" height={Math.max(b.bot - b.top, 2)} fill="#a6caf0" />
          ) : (
            <rect x={b.x - 1.5} y={b.top + 0.5} width="4" height={Math.max(b.bot - b.top, 2)} fill="#000" stroke="#a6caf0" />
          )}
        </g>
      ))}
      <polyline points={yellowLine} fill="none" stroke="#ffff00" strokeWidth="2.4" />
      <polyline points={magentaLine} fill="none" stroke="#ff00ff" strokeWidth="2.4" />
    </g>
    <path d={xMarks(1425, 319, 1465, 331, 11)} stroke="#ff0000" strokeWidth="0.8" />
    <path d={xMarks(1425, 337, 1465, 363, 8)} stroke="#00ff00" strokeWidth="0.8" />
    <path d={xMarks(1425, 388, 1464, 405, 10)} stroke="#2020ff" strokeWidth="1" />
    <g className="font-bold text-[16px]" textAnchor="middle" dominantBaseline="central">
      {greenText.map(([x, y, t]) => (
        <text key={`g${x}`} x={x} y={y} fill="#00ff00">{t}</text>
      ))}
      {overlayText.map(([x, y, t]) => (
        <text key={`o${x}`} x={x} y={y} fill="#ffff00">{t}</text>
      ))}
      {redText.map(([x, y, t]) => (
        <text key={`r${x}${t}`} x={x} y={y} fill="#ff0000" className="text-[17px]">{t}</text>
      ))}
      {yellowText.map(([x, y, t]) => (
        <text key={`y${x}${y}`} x={x} y={y} fill="#ffff00">{t}</text>
      ))}
      {yellowCircles.map(([x, y, t]) => (
        <g key={`yc${x}`}>
          <circle cx={x} cy={y} r="8.5" fill="#ffff00" />
          <text x={x} y={y} fill="#000" className="text-[15px]">{t}</text>
        </g>
      ))}
      {redCircles.map(([x, y, t]) => (
        <g key={`rc${x}`}>
          <circle cx={x} cy={y} r="8.5" fill="#ff0000" />
          <text x={x} y={y} fill="#300000" className="text-[15px]">{t}</text>
        </g>
      ))}
    </g>
    <path d="M822 470q4 -3 8 0" stroke="#00ff00" fill="none" />
    <rect x="1475" y="453" width="20" height="19" fill="#ff0000" shapeRendering="crispEdges" />
    <text x="1485" y="468" textAnchor="middle" className="font-bold text-[16px]" fill="#000">85</text>
    <text x="1499" y="468" className="text-[16px]" fill="#ff0000">PTI</text>
    <g className="font-bold text-[16px]" textAnchor="start">
      {flatPrices.map((x) => (
        <text key={x} x={x} y="720" fill="#808080">137.97</text>
      ))}
      <text x="1751" y="720" fill="#ffffff">137.97</text>
    </g>
  </svg>
);

const tickMarks = (from: number, to: number, zero: number, perUnit: number) => {
  const out: { y: number; len: number }[] = [];
  for (let n = -40; n <= 120; n++) {
    const y = Math.round(zero - (n / 10) * perUnit);
    if (y < from || y > to) continue;
    out.push({ y, len: n % 5 === 0 ? 7 : 3 });
  }
  return out;
};

const PriceAxis = () => (
  <svg width="69" height="608" viewBox="1820 116 69 608" className="block bg-black">
    <g shapeRendering="crispEdges">
      <path d="M1820.5 116V724M1820 116.5H1888" stroke="#ffffff" />
      <path d="M1887.5 116V724" stroke="#b0b0b0" />
      {Array.from({ length: 60 }, (_, n) => 137 - 19 + n * 9.47).filter((y) => y >= 118 && y <= 723).map((y, n) => (
        <path key={n} d={`M1821 ${Math.round(y)}.5h${(n + 3) % 5 === 0 ? 7 : 3}`} stroke="#ffffff" />
      ))}
    </g>
    <g className="font-bold text-[16px]" fill="#fff">
      {priceLabels.map((p, i) => (
        <text key={p} x="1832" y={priceGrid[i] + 7}>{p}</text>
      ))}
    </g>
    <rect x="1820" y="403" width="69" height="17" fill="#0000ff" shapeRendering="crispEdges" />
    <path d="M1820.5 403V420" stroke="#000" />
    <text x="1854" y="417" textAnchor="middle" fill="#fff" className="font-bold text-[16px]">138.10</text>
    <rect x="1866" y="711" width="21" height="13" fill="#c8d8c8" />
    <rect x="1866" y="709" width="5" height="5" fill="#00d000" />
    <path d="M1872 722l4-8 4 8 4-8M1868 722l5-6 6 6 6-6" stroke="#806000" fill="none" strokeWidth="0.8" />
  </svg>
);

const OscPlot = () => (
  <svg width="1782" height="277" viewBox="38 730 1782 277" className="block bg-black">
    <g shapeRendering="crispEdges">
      {[735, 787, 838, 890, 941, 993].map((y) => (
        <path key={y} d={`M42 ${y}.5H1815`} stroke="#e8e8e8" strokeDasharray="1 4.75" />
      ))}
      {vGrid.map((x) => (
        <path key={x} d={`M${x}.5 730V1004`} stroke="#e8e8e8" strokeDasharray="1 4" />
      ))}
      {[761, 812, 864, 916, 967].map((y) =>
        dotCols.map((x) => <rect key={`${x}-${y}`} x={x} y={y} width="1" height="1" fill="#e8e8e8" />),
      )}
      <path d="M431.5 730V1007" stroke="#e00000" />
      {oscBars.map(([i, v]) => {
        const x = Math.floor(41.67 + i * 6);
        const y = 720 + v / 3;
        const top = Math.min(y, 890.5);
        return <rect key={i} x={x} y={Math.round(top)} width="1" height={Math.max(Math.abs(y - 890.5), 1)} fill="#a800b0" />;
      })}
      <polyline points={tealUpper} fill="none" stroke="#008888" strokeWidth="1.3" />
      <polyline points={tealLower} fill="none" stroke="#008888" strokeWidth="1.3" />
    </g>
  </svg>
);

const OscAxis = () => (
  <svg width="69" height="297" viewBox="1820 730 69 297" className="block bg-black">
    <g shapeRendering="crispEdges">
      <path d="M1820.5 730V1027M1820 730.5H1888" stroke="#ffffff" />
      <path d="M1887.5 730V1027" stroke="#b0b0b0" />
      <path d="M1820 1026.5H1888" stroke="#ffffff" />
      {tickMarks(732, 1010, 890, 103).map((t) => (
        <path key={t.y} d={`M1821 ${t.y}.5h${t.len}`} stroke="#ffffff" />
      ))}
    </g>
    <g className="font-bold text-[16px]" fill="#fff">
      {[['1.50', 742], ['1.00', 794], ['0.50', 845], ['-0.50', 948], ['-1.00', 1000]].map(([t, y]) => (
        <text key={t} x="1832" y={y}>{t}</text>
      ))}
    </g>
    <rect x="1820" y="882" width="69" height="17" fill="#0000ff" shapeRendering="crispEdges" />
    <text x="1854" y="896" textAnchor="middle" fill="#fff" className="font-bold text-[16px]">0.00</text>
  </svg>
);

const Tab = ({ label, active, width, z }: { label: string; active?: boolean; width: number; z: string }) => (
  <div className={`relative h-[20px] -ml-[5px] flex items-center justify-center ${z}`} style={{ width }}>
    <svg className="absolute inset-0" width={width} height="20" viewBox={`0 0 ${width} 20`}>
      <path d={`M0.5 0L6.5 19.5H${width - 6.5}L${width - 0.5} 0`} fill={active ? '#ffffff' : '#f4f4f4'} stroke="#555" />
    </svg>
    <span className="relative text-[12px] leading-[14px] whitespace-nowrap text-[#222]">{label}</span>
  </div>
);

const TabStrip = () => (
  <div className="h-[20px] flex items-start bg-[#f0f0f0]">
    <Bevel className="w-[20px] h-[20px]">
      <svg width="6" height="10" viewBox="0 0 6 10"><path d="M6 0v10L0 5z" fill="#000" /></svg>
    </Bevel>
    <Bevel className="w-[21px] h-[20px] mr-[7px]">
      <svg width="6" height="10" viewBox="0 0 6 10"><path d="M0 0v10l6-5z" fill="#000" /></svg>
    </Bevel>
    <Tab label="Osc 5,35" width={60} z="z-0" />
    <Tab label="Osc 16,64" width={68} z="z-10" active />
    <Tab label="CCI 64" width={47} z="z-0" />
  </div>
);

const DateBar = () => (
  <div className="h-[22px] flex items-stretch">
    <div className="relative w-[1779px] ml-px my-px bg-black border-t-2 border-t-[#8a8a8a] border-b border-b-[#c0c0c0] font-bold text-[16px] leading-[16px] text-white">
      <span className="absolute left-[236px] top-0 h-full border-l border-l-white pl-px">01/09/23</span>
      <span className="absolute left-[328px] top-0 h-[17px] leading-[16px] w-[128px] text-center bg-[#0000ff]">01/10/23 - 13:30</span>
      <span className="absolute left-[776px] top-0 h-full border-l border-l-white pl-px">01/16/23</span>
      <span className="absolute left-[1316px] top-0 h-full border-l border-l-white pl-px">01/23/23</span>
    </div>
    <div className="w-[70px] ml-[2px] bg-[#0000ff]" />
  </div>
);

const Legend = ({ rows, valueLeft }: { rows: { k: string; v: string; c: string; w?: string }[]; valueLeft: string }) => (
  <div className="absolute left-[2px] top-0 font-bold text-[16px] leading-[19px]">
    {rows.map((r) => (
      <div key={r.k + r.v} className={`flex ${r.c}`}>
        <span className={r.w ?? valueLeft}>{r.k}</span>
        <span>{r.v}</span>
      </div>
    ))}
  </div>
);

export default function App() {
  return (
    <div className="w-[1920px] h-[1080px] flex flex-col overflow-hidden bg-[#f0f0f0] font-['Liberation_Sans',Arial,sans-serif]">
      {/* title bar, aero glass over a blurred desktop */}
      <div className="h-[28px] flex items-start bg-[linear-gradient(90deg,#c9d9e8_0%,#c2d3e4_14%,#a4b9ce_22%,#b7cade_30%,#96b2cf_36%,#8aaccb_42%,#a4caf2_46%,#a8cff6_70%,#9cc5ef_78%,#3a6c9e_78.2%,#2c5a88_85%,#3a6a98_100%)] border-b border-b-[#3c4854]">
        <svg width="21" height="20" viewBox="0 0 21 20" className="mt-[4px]">
          <path d="M0 6l5 3 6-2 9-5v9H0z" fill="#2030a8" />
          <path d="M1 14l6-5 4 2 8-8" stroke="#e01030" strokeWidth="1.6" fill="none" />
        </svg>
        <span className="ml-[4px] mt-[5px] font-['Roboto',sans-serif] text-[14.8px] leading-[20px] text-[#101010]">Advanced GET for TS2000i - [BUND, 30]</span>
        <div className="ml-auto mr-[3px] flex h-[25px] rounded-b-[4px] border border-t-0 border-[#28384a] overflow-hidden">
          <div className="w-[37px] flex items-end justify-center pb-[5px] border-r border-r-[#b0c4d8] bg-[linear-gradient(#a8b8c8,#7e98b4_50%,#4e7096)]">
            <div className="w-[17px] h-[5px] bg-white border border-[#40566c]" />
          </div>
          <div className="w-[36px] flex items-center justify-center border-r border-r-[#b0c4d8] bg-[linear-gradient(#98aec4,#6e8cac_50%,#47698f)]">
            <svg width="20" height="18" viewBox="0 0 20 18" fill="none" stroke="#fff" strokeWidth="2">
              <path d="M6 3h12v10" stroke="#dce6f0" /><path d="M2 6h12v11H2z" stroke="#fff" /><path d="M5 9h6v5H5z" stroke="#40566c" strokeWidth="1" />
            </svg>
          </div>
          <div className="w-[63px] flex items-center justify-center bg-[linear-gradient(#e0a888,#d08870_40%,#c83c28_60%,#b85030)]">
            <svg width="24" height="20" viewBox="0 0 24 20"><path d="M3 1h6l3 5 3-5h6l-6 9 6 9h-6l-3-5-3 5H3l6-9z" fill="#fff" stroke="#60201c" strokeWidth="0.6" /></svg>
          </div>
        </div>
      </div>

      {/* menu */}
      <div className="h-[29px] flex items-center bg-[linear-gradient(#ffffff_0%,#f7f9fc_30%,#e4e9f4_34%,#dadfee_100%)] font-['Roboto',sans-serif] text-[15px] text-[#1a1a1a]">
        <div className="w-[34px] flex justify-center pl-[2px]"><Dagger /></div>
        <span className="w-[37px] mt-[2px]">File</span>
        <span className="w-[47px] mt-[2px]">Page</span>
        <span className="w-[49px] mt-[2px]">Chart</span>
        <span className="w-[50px] mt-[2px]">Tools</span>
        <span className="w-[46px] mt-[2px]">View</span>
        <span className="w-[70px] mt-[2px]">Window</span>
        <span className="mt-[2px]">Help</span>
        <div className="ml-auto flex h-full pt-[1px]">
          {[
            <path key="m" d="M7 14h6v2H7z" fill="#6c7c90" />,
            <path key="r" d="M8 6h7v6M5 9h7v6H5z" stroke="#6c7c90" fill="none" />,
            <path key="c" d="M6 6l7 8M13 6l-7 8" stroke="#6c7c90" strokeWidth="2" />,
          ].map((g, i) => (
            <div key={i} className="w-[24px] h-[28px] flex items-center justify-center border border-[#bcc8d8] bg-[linear-gradient(#f0f4fa,#dbe3f0)]">
              <svg width="19" height="20" viewBox="0 0 19 20">{g}</svg>
            </div>
          ))}
        </div>
      </div>

      <Toolbar />

      <div className="h-[966px] flex">
        {/* left tools */}
        <aside className="w-[38px] h-[965px] flex flex-col border-b border-b-[#b8b8b8]">
          <div className="h-[414px] flex flex-col gap-px pt-[6px] pl-[3px] border-b border-b-[#a0a0a0]">
            {leftTools.map((t) => (
              <Bevel key={t.key} pressed={t.pressed} className="w-[30px] h-[21px] shrink-0">{t.icon}</Bevel>
            ))}
            <Bevel className="w-[30px] h-[25px] mt-[4px] shrink-0">
              <Ico w={24} h={20}>
                <path d="M5 5.5h13v13H5z" fill="#fff" /><path d="M7 9h9M7 12h9M7 15h9" strokeDasharray="2 1" />
                <path d="M16 1h5v7h-5z" fill="#0018a0" stroke="none" />
              </Ico>
            </Bevel>
          </div>
        </aside>

        <main className="w-[1852px] flex flex-col">
          <div className="h-[19px] w-[1851px] flex items-center bg-[#0000ff] font-bold text-[16px] text-white pl-[7px]">
            <span className="w-[715px]">01/24/23</span>
            <span className="w-[115px]">O: 137.96</span>
            <span className="w-[66px]">138.14</span>
            <span className="w-[24px] text-[#ff0000]">L:</span>
            <span className="w-[66px]">137.87</span>
            <span>C: 137.98</span>
            <span className="ml-auto pr-[7px] text-[#ff0000]">-0.01</span>
          </div>
          <div className="h-[6px] w-[1851px] border-t-[3px] border-t-white bg-[#c8c8c8]" />
          <div className="h-[608px] flex">
            <div className="relative">
              <PricePlot />
              <Legend
                valueLeft="w-[31px]"
                rows={[
                  { k: 'OP', v: '136.39', c: 'text-[#a6caf0]' },
                  { k: 'HI', v: '136.41', c: 'text-[#a6caf0]' },
                  { k: 'LO', v: '136.32', c: 'text-[#a6caf0]' },
                  { k: 'CL', v: '136.35', c: 'text-[#a6caf0]' },
                  { k: 'MA', v: '136.90', c: 'text-[#ffff00]' },
                  { k: 'MA', v: '136.70', c: 'text-[#ff00ff]' },
                ]}
              />
            </div>
            <PriceAxis />
          </div>
          <div className="h-[6px] w-[1851px] border-t-4 border-t-white bg-[#484848]" />
          <div className="h-[297px] flex">
            <div className="w-[1782px] flex flex-col">
              <div className="relative">
                <OscPlot />
                <Legend
                  valueLeft="w-[39px]"
                  rows={[
                    { k: 'Osc', v: '16,64', c: 'text-white', w: 'w-[36px]' },
                    { k: 'OSC', v: '0.25', c: 'text-[#a000a0]' },
                    { k: 'UP', v: '0.39', c: 'text-[#008080]' },
                    { k: 'DN', v: '-0.22', c: 'text-[#008080]' },
                  ]}
                />
              </div>
              <TabStrip />
            </div>
            <OscAxis />
          </div>
          <div className="h-[7px]" />
          <DateBar />
        </main>

        {/* right tools */}
        <aside className="w-[30px] h-[464px] flex flex-col gap-px pt-[7px] pl-[4px] border-l-2 border-l-[#d0d0d0] border-b border-b-[#a0a0a0]">
          {rightTools.map((t) => (
            <Bevel
              key={t.key}
              pressed={t.pressed}
              className={`w-[22px] h-[21px] shrink-0 ${t.gap === 4 ? 'mt-[4px]' : ''} ${t.gap === 6 ? 'mt-[6px]' : ''}`}
            >
              {t.icon}
            </Bevel>
          ))}
        </aside>
      </div>

      {/* status bar */}
      <div className="h-[22px] flex items-end border-t border-t-[#d8d8d8] font-['Roboto',sans-serif] text-[15px] leading-[18px] text-[#222]">
        <span className="w-[1434px] pl-[2px] whitespace-nowrap">For Help, press F1</span>
        <span className="w-[485px] h-[19px] pl-[2px] border-t border-l border-[#a8a8a8] whitespace-nowrap">Page: 3 - BUND B</span>
      </div>
      <div className="h-px bg-[#4c6478]" />
    </div>
  );
}
